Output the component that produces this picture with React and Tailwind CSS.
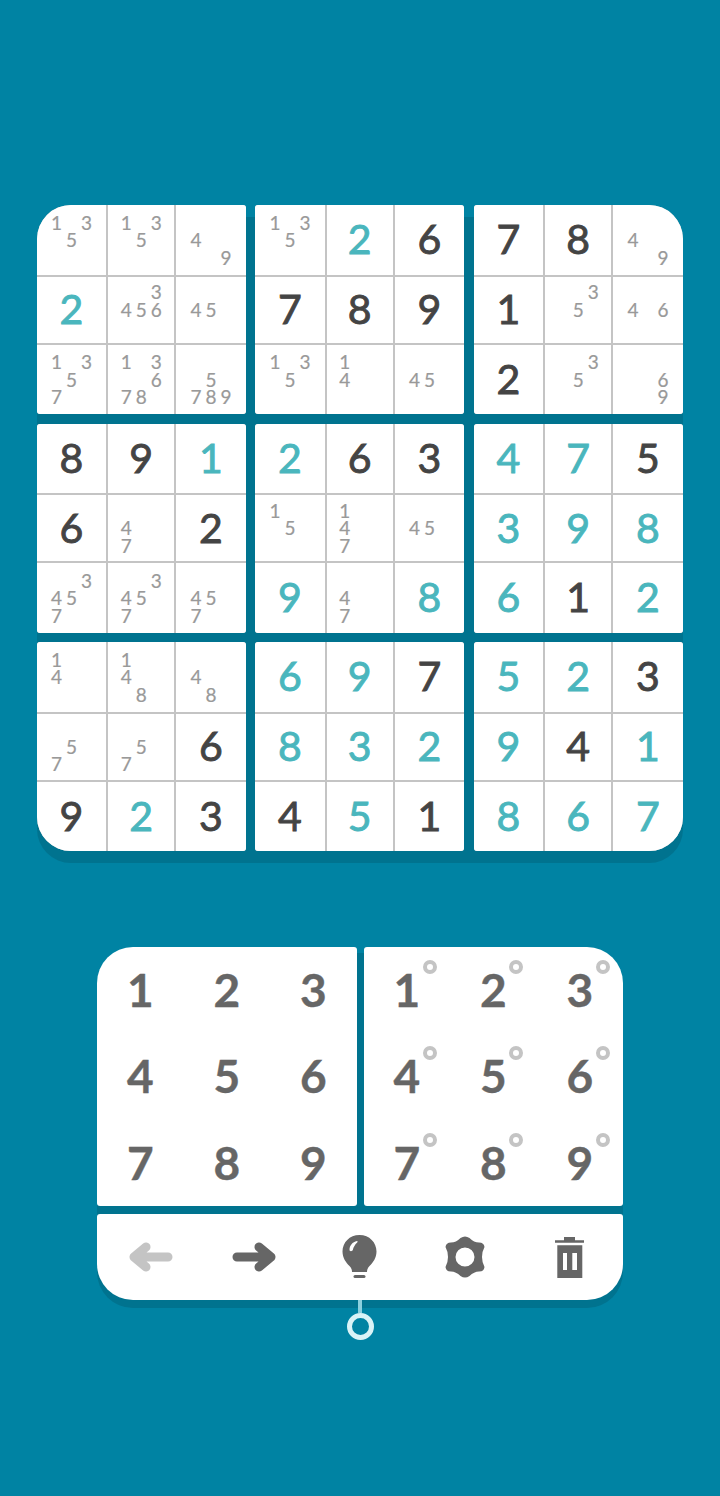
const BOXES = [
  ['135', '135', '49', 'T2', '3456', '45', '1357', '13678', '5789'],
  ['135', 'T2', 'D6', 'D7', 'D8', 'D9', '135', '14', '45'],
  ['D7', 'D8', '49', 'D1', '35', '46', 'D2', '35', '69'],
  ['D8', 'D9', 'T1', 'D6', '47', 'D2', '3457', '3457', '457'],
  ['T2', 'D6', 'D3', '15', '147', '45', 'T9', '47', 'T8'],
  ['T4', 'T7', 'D5', 'T3', 'T9', 'T8', 'T6', 'D1', 'T2'],
  ['14', '148', '48', '57', '57', 'D6', 'D9', 'T2', 'D3'],
  ['T6', 'T9', 'D7', 'T8', 'T3', 'T2', 'D4', 'T5', 'D1'],
  ['T5', 'T2', 'D3', 'T9', 'D4', 'T1', 'T8', 'T6', 'T7'],
];

const DIGITS = ['1', '2', '3', '4', '5', '6', '7', '8', '9'];

const BOX_CORNERS = {
  0: 'rounded-[3px] rounded-tl-[34px]',
  2: 'rounded-[3px] rounded-tr-[34px]',
  6: 'rounded-[3px] rounded-bl-[34px]',
  8: 'rounded-[3px] rounded-br-[34px]',
};

function Cell({ value }) {
  if (value[0] === 'T' || value[0] === 'D') {
    const color = value[0] === 'T' ? 'text-[#4ab6bd]' : 'text-[#444444]';
    return (
      <div className={`bg-white flex items-center justify-center pb-[2px] text-[41px] leading-none [-webkit-text-stroke:0.9px] ${color}`}>
        {value[1]}
      </div>
    );
  }
  return (
    <div className="bg-white flex items-center justify-center">
      <div className="grid grid-cols-[repeat(3,15px)] grid-rows-[repeat(3,17.5px)] text-[19px] leading-[17.5px] text-center text-[#999999] [-webkit-text-stroke:0.2px]">
        {DIGITS.map(d => (
          <span key={d}>{value.includes(d) ? d : ''}</span>
        ))}
      </div>
    </div>
  );
}

function Box({ cells, index }) {
  const corners = BOX_CORNERS[index] || 'rounded-[3px]';
  return (
    <div className={`relative h-[209px] overflow-hidden bg-[#c4c4c4] grid grid-cols-[1fr_66px_1fr] grid-rows-[1fr_66px_1fr] gap-[2px] ${corners}`}>
      {cells.map((c, i) => (
        <Cell key={i} value={c} />
      ))}
    </div>
  );
}

function PadPanel({ marked, corner }) {
  return (
    <div className={`relative bg-white h-[259px] grid grid-cols-3 grid-rows-3 ${corner}`}>
      {DIGITS.map(d => (
        <div key={d} className="relative flex items-center justify-center text-[46px] leading-none font-bold text-[#666666] [-webkit-text-stroke:0.4px]">
          {d}
          {marked && (
            <span className="absolute left-[59px] top-[13px] w-[14px] h-[14px] rounded-full border-[4px] border-[#c4c4c4]" />
          )}
        </div>
      ))}
    </div>
  );
}

function ArrowIcon({ flip, color }) {
  return (
    <svg width="46" height="32" viewBox="0 0 46 32" fill="none" stroke={color} strokeWidth="9" strokeLinecap="round" strokeLinejoin="round" className={flip ? '-scale-x-100' : ''}>
      <path d="M41 16H8M19 6L7 16L19 26" />
    </svg>
  );
}

function BulbIcon() {
  return (
    <svg width="35" height="44" viewBox="0 0 35 44">
      <path fill="#666666" d="M17.500 0C7.500 0 0.500 7.500 0.500 16.500C0.500 23 4 27.500 7.500 31C9.500 33 10 35 10 37H25C25 35 25.500 33 27.500 31C31 27.500 34.500 23 34.500 16.500C34.500 7.500 27.500 0 17.500 0Z" />
      <path fill="#ffffff" d="M7.500 15C7.500 10.500 10.500 7 15 6C15.800 6 15.800 7 15.200 7.500C13 9.500 11.500 12 10.800 15C10.300 16.500 7.500 16.500 7.500 15Z" />
      <rect x="11.500" y="40" width="12" height="3" rx="1.500" fill="#666666" />
    </svg>
  );
}

function GearIcon() {
  return (
    <svg width="40" height="42" viewBox="0 0 40 42">
      <path
        fill="#666666"
        fillRule="evenodd"
        d="M15.500 2Q20 -1 24.500 2Q29 6.500 34 6.500Q39 6.500 39.500 11Q37 15.500 37 21Q37 26.500 39.500 31Q39 35.500 34 35.500Q29 35.500 24.500 40Q20 43 15.500 40Q11 35.500 6 35.500Q1 35.500 0.500 31Q3 26.500 3 21Q3 15.500 0.500 11Q1 6.500 6 6.500Q11 6.500 15.500 2ZM20 11.500A9.500 9.500 0 1 0 20 30.500A9.500 9.500 0 1 0 20 11.500Z"
      />
    </svg>
  );
}

function TrashIcon() {
  return (
    <svg width="29" height="41" viewBox="0 0 29 41">
      <path
        fill="#666666"
        fillRule="evenodd"
        d="M9 0H20V3.300H29V5.800H0V3.300H9ZM2.300 8.300H27.300V41H2.300ZM8 16V33H12V16ZM17.300 16V33H22V16Z"
      />
    </svg>
  );
}

export default function App() {
  return (
    <div className="w-[720px] h-[1496px] overflow-hidden bg-[#0083a3] pt-[205px] font-['Lato',sans-serif]">
      <div className="relative ml-[36.75px] w-[646px] grid grid-cols-3 gap-[9.5px]">
        <div className="absolute inset-x-0 top-[12px] -bottom-[12px] rounded-[34px] bg-[#00738f]" />
        {BOXES.map((cells, i) => (
          <Box key={i} cells={cells} index={i} />
        ))}
      </div>

      <div className="relative mt-[96px] mx-[97px]">
        <div className="absolute inset-x-0 top-[6px] -bottom-[8px] rounded-[36px] bg-[#00738f]" />
        <div className="relative grid grid-cols-2 gap-[7px]">
          <PadPanel corner="rounded-[3px] rounded-tl-[36px]" />
          <PadPanel marked corner="rounded-[3px] rounded-tr-[36px]" />
        </div>
        <div className="relative mt-[8px] h-[86px] bg-white rounded-[3px] rounded-b-[36px] flex items-center">
          <div className="w-[105px] flex justify-center"><ArrowIcon flip={false} color="#c4c4c4" /></div>
          <div className="w-[105px] flex justify-center"><ArrowIcon flip color="#666666" /></div>
          <div className="w-[105px] flex justify-center"><BulbIcon /></div>
          <div className="w-[105px] flex justify-center"><GearIcon /></div>
          <div className="w-[105px] flex justify-center"><TrashIcon /></div>
        </div>
      </div>

      <div className="relative flex flex-col items-center">
        <div className="w-[4px] h-[13px] bg-[#8ccfdd]" />
        <div className="w-[27px] h-[27px] rounded-full border-[5px] border-[#d9f3f7]" />
      </div>
    </div>
  );
}
